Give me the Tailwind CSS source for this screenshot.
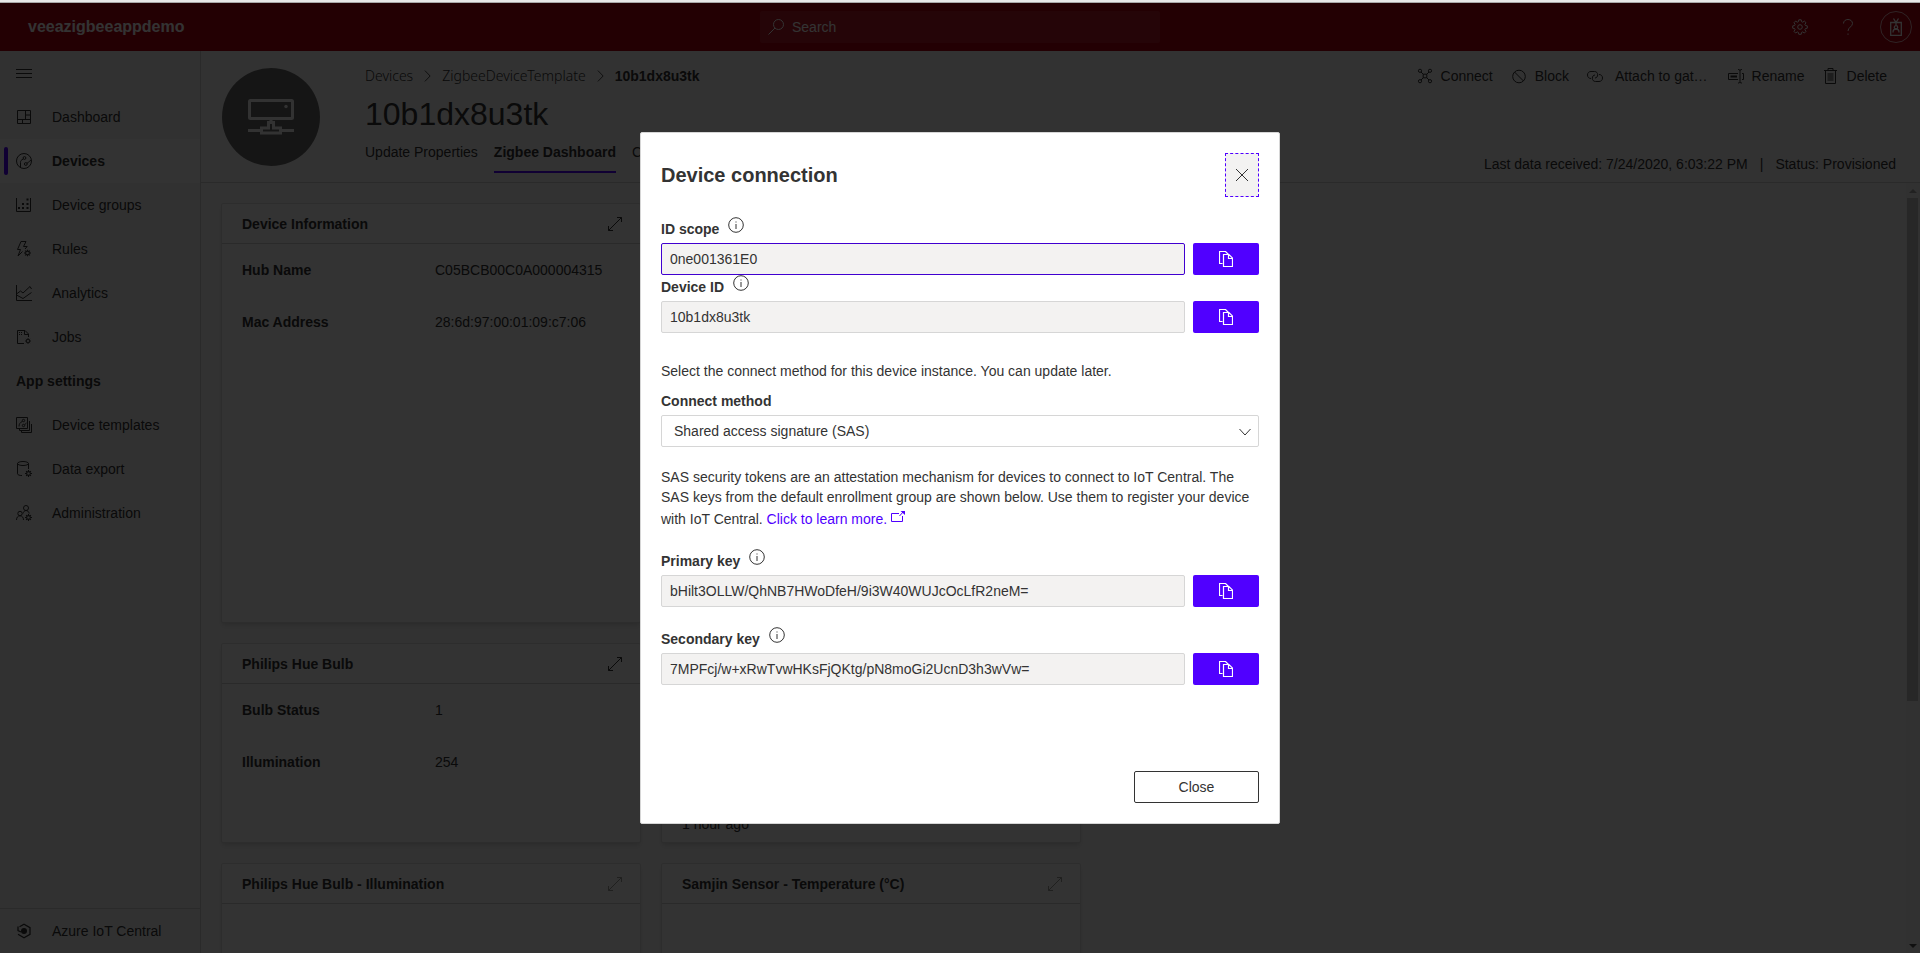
<!DOCTYPE html>
<html lang="en">
<head>
<meta charset="utf-8">
<meta name="viewport" content="width=device-width, initial-scale=1">
<title>Device connection</title>
<script src="https://cdn.jsdelivr.net/npm/@tailwindcss/browser@4"></script>
</head>
<body class="flex h-screen flex-col overflow-hidden bg-[#fafafa] font-['Liberation_Sans',Arial,sans-serif] text-sm leading-5 text-[#333333]">

<!-- Shared icon symbols -->
<svg class="hidden" aria-hidden="true">
  <symbol id="i-gear" viewBox="0 0 16 16"><path fill="none" stroke="currentColor" d="M6.8.8h2.4l.4 1.9 1.1.5 1.7-1.1 1.6 1.6-1.1 1.7.5 1.1 1.9.4v2.3l-1.9.4-.5 1.1 1.1 1.7-1.6 1.6-1.7-1.1-1.1.5-.4 1.9H6.8l-.4-1.9-1.1-.5-1.7 1.1L2 12.400l1.100-1.700-.5-1.100L.7 9.200V6.900l1.900-.4.500-1.100L2 3.700l1.600-1.600 1.700 1.100 1.100-.5z"/><circle cx="8" cy="8" r="2.300" fill="none" stroke="currentColor"/></symbol>
  <symbol id="i-minigear" viewBox="0 0 6 6"><circle cx="3" cy="3" r="1.600" fill="none" stroke="currentColor" stroke-width=".9"/><path stroke="currentColor" stroke-width=".9" d="M3 0v1.200M3 4.800V6M0 3h1.200M4.800 3H6M.9.9l.8.8M4.300 4.300l.8.8M5.100.9l-.8.8M1.700 4.300l-.8.8"/></symbol>
  <symbol id="i-expand" viewBox="0 0 14 14"><path fill="none" stroke="currentColor" d="M.5 13.500l13-13M9 .5h4.500V5M.5 9v4.500H5"/></symbol>
  <symbol id="i-info" viewBox="0 0 16 16"><circle cx="8" cy="8" r="7.300" fill="none" stroke="currentColor"/><path stroke="currentColor" d="M8 7v5M8 4.500v1"/></symbol>
  <symbol id="i-copy" viewBox="0 0 14 16"><path fill="none" stroke="currentColor" stroke-width="1.200" d="M3.500 12.500h-3V.5h6l3 3M4.500 3.500h5.500l3.500 3.500v8.500h-9zM9.500 3.500v4h4"/></symbol>
  <symbol id="i-chev" viewBox="0 0 8 14"><path fill="none" stroke="currentColor" d="M1 .8L7 7l-6 6.200"/></symbol>
</svg>

<div class="h-[3px] shrink-0 border-b border-[#a8a8a8] bg-[#e8e8e8]"></div>

<header class="grid h-12 shrink-0 grid-cols-[1fr_400px_1fr] items-center bg-[#b00010] text-white">
  <div class="pl-7 text-base font-bold">veeazigbeeappdemo</div>
  <label class="flex h-8 items-center gap-2 rounded-xs bg-white/10 pl-2">
    <svg class="size-4 shrink-0" viewBox="0 0 16 16" fill="none" stroke="currentColor" aria-hidden="true"><circle cx="10.500" cy="5.500" r="5"/><path d="M7 9L.5 15.500"/></svg>
    <input type="search" aria-label="Search" placeholder="Search" class="w-full bg-transparent outline-none placeholder:text-white">
  </label>
  <div class="flex items-center justify-end pr-2">
    <button aria-label="Settings" class="grid size-12 place-items-center"><svg class="size-4"><use href="#i-gear"/></svg></button>
    <button aria-label="Help" class="grid size-12 place-items-center"><svg class="size-4" viewBox="0 0 16 16" fill="none" stroke="currentColor"><path d="M3.500 4.500c0-2.500 2-4 4.500-4s4.500 1.700 4.500 4c0 3-4.500 4-4.500 7.500M8 14.500v1.300"/></svg></button>
    <button aria-label="Account" class="ml-2 grid size-8 place-items-center rounded-full border border-white/70"><svg class="h-[18px] w-3" viewBox="0 0 12 18" fill="none" stroke="currentColor" stroke-width="1.300"><path d="M.7 4.500h10.600v12.800H.7zM3.500.5l2.500 4 2.500-4M6 4v3M3 14.500c0-2 1-3.500 3-3.500s3 1.500 3 3.500"/><circle cx="6" cy="9.300" r="1.700"/></svg></button>
  </div>
</header>

<div class="flex min-h-0 flex-1">
  <nav class="flex w-[201px] shrink-0 flex-col border-r border-[#d2d2d2] bg-[#f5f5f5]">
    <button aria-label="Toggle navigation" class="flex h-11 items-center pl-4"><svg class="size-4" viewBox="0 0 16 16" stroke="currentColor"><path d="M0 4.500h16M0 8.500h16M0 12.500h16"/></svg></button>
    <a href="#" class="flex h-11 items-center gap-5 pl-4"><svg class="size-4" viewBox="0 0 16 16" fill="none" stroke="currentColor"><path d="M1.500 1.500h13v13h-13zM9.500 1.500v9M1.500 10.500h13M9.500 6h5M6.500 10.500v4"/></svg>Dashboard</a>
    <a href="#" aria-current="page" class="flex h-11 items-center bg-[#fdfdfd] pl-1 font-bold"><span class="h-7 w-1 rounded-full bg-[#5000ff]"></span><svg class="mr-5 ml-2 size-4" viewBox="0 0 16 16" fill="none" stroke="currentColor"><circle cx="8" cy="8" r="7.500"/><circle cx="8.500" cy="5" r="1.400"/><circle cx="9.800" cy="11" r="1.400"/><path d="M7.300 6C5 7 4.500 8 4.500 9.500V14M11 10.300C13 9 13.500 8 15 7.300"/></svg>Devices</a>
    <a href="#" class="flex h-11 items-center gap-5 pl-4"><svg class="size-4" viewBox="0 0 16 16"><path fill="none" stroke="currentColor" d="M.5 1v13.500h14V1"/><path fill="currentColor" d="M2 10h2v2H2zM6 10h2v2H6zM10.500 10h2v2h-2zM6 6h2v2H6zM10.500 6h2v2h-2zM10.500 1.500h2v2h-2z"/></svg>Device groups</a>
    <a href="#" class="flex h-11 items-center gap-5 pl-4"><svg class="size-4" viewBox="0 0 16 16" fill="none" stroke="currentColor"><path d="M5 .5h5L7.500 5.500h3.700L9 8M5 .5L1.500 8.500h3L2 15l4.500-4.500"/><use href="#i-minigear" x="8" y="8.500" width="7" height="7"/></svg>Rules</a>
    <a href="#" class="flex h-11 items-center gap-5 pl-4"><svg class="size-4" viewBox="0 0 16 16" fill="none" stroke="currentColor"><path d="M.5 0v15.500H16M.5 9l4-3 2.500 2L14 1.500l1.500 2.500M.5 10L7 13.500l8.500-6"/></svg>Analytics</a>
    <a href="#" class="flex h-11 items-center gap-5 pl-4"><svg class="size-4" viewBox="0 0 16 16" fill="none" stroke="currentColor"><path d="M8 14.500H1.500v-13H9l3.500 3.500v3M8.500 1.500V5.500h4"/><path stroke-dasharray="1 1" d="M3 3.500h4M3 5.500h4"/><use href="#i-minigear" x="9" y="9" width="6" height="6"/></svg>Jobs</a>
    <h2 class="flex h-11 items-center pl-4 font-bold">App settings</h2>
    <a href="#" class="flex h-11 items-center gap-5 pl-4"><svg class="size-4" viewBox="0 0 16 16" fill="none" stroke="currentColor"><path d="M.5.5h11v11H.5zM3.500 11.500v2h10V4M5.500 13.500v2h10V7"/><circle cx="7.500" cy="3.500" r="1.200"/><circle cx="7.500" cy="8.500" r="1.200"/><path d="M6.500 4.300C4 5.500 3 7 3 9.500M8.500 7.800L10.500 6"/></svg>Device templates</a>
    <a href="#" class="flex h-11 items-center gap-5 pl-4"><svg class="size-4" viewBox="0 0 16 16" fill="none" stroke="currentColor"><ellipse cx="7" cy="2.500" rx="5.500" ry="2"/><path d="M1.500 2.500v10.300c0 1 2 1.700 4.500 1.800M12.500 2.500V8"/><use href="#i-minigear" x="9" y="9" width="7" height="7"/></svg>Data export</a>
    <a href="#" class="flex h-11 items-center gap-5 pl-4"><svg class="size-4" viewBox="0 0 16 16" fill="none" stroke="currentColor"><circle cx="10" cy="3" r="2.500"/><circle cx="4" cy="8.500" r="2.200"/><path d="M.5 15c0-2.700 1.500-4.200 3.500-4.200S7.500 12.300 7.500 15M7 8.500c.5-1.800 1.500-3 3-3s2.800 1 3.200 3"/><use href="#i-minigear" x="9" y="9" width="7" height="7"/></svg>Administration</a>
    <a href="#" class="mt-auto flex h-[45px] items-center gap-5 border-t border-[#d2d2d2] pl-4"><svg class="size-4" viewBox="0 0 16 16" fill="none" stroke="currentColor"><path stroke-width="1.300" d="M3.500 3.800L8 1.300l6 3.400v6.600L8 14.700l-6-3.400M2 3.500v4l3 1.500"/><circle cx="8" cy="8" r="3" fill="currentColor" stroke="none"/></svg>Azure IoT Central</a>
  </nav>

  <main class="flex min-w-0 flex-1 flex-col">
    <section class="flex h-[132px] shrink-0 justify-between border-b border-[#d2d2d2] pl-[21px]">
      <div class="flex gap-[45px]">
        <div class="mt-[17px] grid size-[98px] shrink-0 place-items-center rounded-full bg-[#6b6b6b] text-[#fafafa]">
          <svg class="h-9 w-[46px]" viewBox="0 0 46 36" fill="none" stroke="currentColor" stroke-width="3"><rect x="1.500" y="1.500" width="43" height="18" rx="1"/><path d="M23 20v3M0 31.500h13M33 31.500h13M20.500 29v-5.500h5V29h7v5h-19V29z"/><circle cx="38" cy="7.500" r="1.700" fill="currentColor" stroke="none"/></svg>
        </div>
        <div>
          <nav aria-label="Breadcrumb" class="mt-[15px] flex items-center gap-[11px] whitespace-nowrap">
            <a href="#" class="font-['Noto_Sans',sans-serif] font-light">Devices</a>
            <svg class="h-[14px] w-[7px]"><use href="#i-chev"/></svg>
            <a href="#" class="font-['Noto_Sans',sans-serif] font-light">ZigbeeDeviceTemplate</a>
            <svg class="h-[14px] w-[7px]"><use href="#i-chev"/></svg>
            <span class="font-bold">10b1dx8u3tk</span>
          </nav>
          <h1 class="mt-2 text-[32px] leading-10">10b1dx8u3tk</h1>
          <div role="tablist" class="mt-2 flex gap-4 whitespace-nowrap">
            <button role="tab" class="h-[31px] pb-[11px]">Update Properties</button>
            <button role="tab" aria-selected="true" class="h-[31px] border-b-2 border-[#5000ff] pb-[9px] font-bold">Zigbee Dashboard</button>
            <button role="tab" class="h-[31px] pb-[11px]">Commands</button>
          </div>
        </div>
      </div>
      <div class="flex flex-col items-end justify-between pt-[15px] pb-2 whitespace-nowrap">
        <div class="flex pr-[33px]">
          <button class="mr-[18px] flex items-center gap-2"><svg class="size-4" viewBox="0 0 16 16" fill="none" stroke="currentColor"><circle cx="3" cy="2.800" r="1.600"/><circle cx="13" cy="2.800" r="1.600"/><circle cx="3" cy="13.200" r="1.600"/><circle cx="13" cy="13.200" r="1.600"/><path d="M6.200 6.200h3.600v3.600H6.200zM4 4l2.300 2.300M12 4L9.700 6.300M4 12l2.300-2.300M12 12L9.700 9.700"/></svg>Connect</button>
          <button class="mr-[18px] flex items-center gap-2"><svg class="size-4" viewBox="0 0 16 16" fill="none" stroke="currentColor"><circle cx="8" cy="8.500" r="6.300"/><path d="M3.500 4l9 9"/></svg>Block</button>
          <button class="mr-5 flex items-center gap-3"><svg class="size-4" viewBox="0 0 16 16" fill="none" stroke="currentColor"><path d="M4 10.500C2 10.500.5 9.200.5 7S2 3.500 4 3.500h3.500c2 0 3.200 1.500 3.200 3.300S9.500 10 8 10"/><path d="M12 6.500c2 0 3.500 1.300 3.500 3.500s-1.500 3.500-3.500 3.500H8.500c-2 0-3.200-1.500-3.200-3.300S6.500 7 8 7"/></svg>Attach to gat…</button>
          <button class="mr-[18px] flex items-center gap-2"><svg class="size-4" viewBox="0 0 16 16" fill="none" stroke="currentColor"><path d="M10 11.500H.5v-6H10M14 5.500h1.500v6H14M12 2v12.500M10 1.500c1.500 0 2 .5 2 1 0-.5.500-1 2-1M10 15c1.500 0 2-.5 2-1 0 .5.500 1 2 1"/><path stroke-width="2" d="M2.500 8.500H9"/></svg>Rename</button>
          <button class="flex items-center gap-2"><svg class="size-4" viewBox="0 0 16 16" fill="none" stroke="currentColor"><path d="M1 2.500h13M5 2.500v-2h5v2M2.500 2.500v13h10v-13"/><path fill="currentColor" fill-opacity=".5" stroke="none" d="M4.500 5h6v8h-6z"/></svg>Delete</button>
        </div>
        <div class="flex gap-3 pr-6"><span>Last data received: 7/24/2020, 6:03:22 PM</span><span>|</span><span>Status: Provisioned</span></div>
      </div>
    </section>

    <div class="flex min-h-0 flex-1">
      <div class="grid flex-1 grid-cols-[420px_420px] grid-rows-[420px_200px_200px] gap-5 overflow-hidden p-5">
        <section class="rounded-xs border border-[#e0e0e0] bg-[#fdfdfd] shadow-md">
          <div class="flex h-10 items-center justify-between border-b border-[#d2d2d2] pr-[18px] pl-5"><h3 class="font-bold">Device Information</h3><button aria-label="Expand"><svg class="size-[14px]"><use href="#i-expand"/></svg></button></div>
          <dl class="grid grid-cols-[193px_1fr] gap-y-8 px-5 pt-4">
            <dt class="font-bold">Hub Name</dt><dd>C05BCB00C0A000004315</dd>
            <dt class="font-bold">Mac Address</dt><dd>28:6d:97:00:01:09:c7:06</dd>
          </dl>
        </section>
        <section class="rounded-xs border border-[#e0e0e0] bg-[#fdfdfd] shadow-md"></section>
        <section class="rounded-xs border border-[#e0e0e0] bg-[#fdfdfd] shadow-md">
          <div class="flex h-10 items-center justify-between border-b border-[#d2d2d2] pr-[18px] pl-5"><h3 class="font-bold">Philips Hue Bulb</h3><button aria-label="Expand"><svg class="size-[14px]"><use href="#i-expand"/></svg></button></div>
          <dl class="grid grid-cols-[193px_1fr] gap-y-8 px-5 pt-4">
            <dt class="font-bold">Bulb Status</dt><dd>1</dd>
            <dt class="font-bold">Illumination</dt><dd>254</dd>
          </dl>
        </section>
        <section class="flex items-end rounded-xs border border-[#e0e0e0] bg-[#fdfdfd] px-5 pb-2 shadow-md"><p>1 hour ago</p></section>
        <section class="rounded-xs border border-[#e0e0e0] bg-[#fdfdfd] shadow-md">
          <div class="flex h-10 items-center justify-between border-b border-[#d2d2d2] pr-[18px] pl-5"><h3 class="font-bold">Philips Hue Bulb - Illumination</h3><button disabled aria-label="Expand" class="text-[#a19f9d]"><svg class="size-[14px]"><use href="#i-expand"/></svg></button></div>
        </section>
        <section class="rounded-xs border border-[#e0e0e0] bg-[#fdfdfd] shadow-md">
          <div class="flex h-10 items-center justify-between border-b border-[#d2d2d2] pr-[18px] pl-5"><h3 class="font-bold">Samjin Sensor - Temperature (°C)</h3><button disabled aria-label="Expand" class="text-[#a19f9d]"><svg class="size-[14px]"><use href="#i-expand"/></svg></button></div>
        </section>
      </div>
      <!-- Scrollbar -->
      <div class="flex w-[14px] shrink-0 flex-col items-center bg-[#f5f5f5]" aria-hidden="true">
        <svg class="h-[15px] w-2 shrink-0 text-[#a3a3a3]" viewBox="0 0 8 15"><path fill="currentColor" d="M4 6l4 4H0z"/></svg>
        <div class="min-h-0 w-full flex-1 pr-0.5 pl-px"><div class="h-[68%] bg-[#c1c1c1]"></div></div>
        <svg class="h-[15px] w-2 shrink-0" viewBox="0 0 8 15"><path fill="#505050" d="M4 10L0 6h8z"/></svg>
      </div>
    </div>
  </main>
</div>

<!-- Modal layer -->
<div class="fixed inset-x-0 top-[3px] bottom-0 grid place-items-center bg-black/80">
  <div role="dialog" aria-modal="true" aria-labelledby="dlg-title" class="w-full max-w-[640px] rounded-xs border border-[#d6d6d6] bg-white p-5">
    <div class="flex h-11 items-center justify-between">
      <h2 id="dlg-title" class="text-xl font-bold">Device connection</h2>
      <button aria-label="Close dialog" class="grid h-11 w-[34px] place-items-center border border-dashed border-[#5000ff] bg-[#f3f2f1]"><svg class="size-3" viewBox="0 0 12 12" stroke="currentColor"><path d="M0 0l12 12M12 0L0 12"/></svg></button>
    </div>

    <div class="mt-5 flex h-[26px] items-start gap-[9px]"><label for="scope" class="pt-0.5 font-bold">ID scope</label><svg class="size-4"><use href="#i-info"/></svg></div>
    <div class="flex gap-2">
      <input id="scope" readonly value="0ne001361E0" class="h-8 min-w-0 flex-1 rounded-xs border border-[#4000d0] bg-[#f3f2f1] px-2 outline-none">
      <button aria-label="Copy ID scope" class="grid h-8 w-[66px] place-items-center rounded-xs bg-[#5000ff] text-white"><svg class="h-4 w-[14px]"><use href="#i-copy"/></svg></button>
    </div>

    <div class="flex h-[26px] items-start gap-[9px]"><label for="devid" class="pt-0.5 font-bold">Device ID</label><svg class="size-4"><use href="#i-info"/></svg></div>
    <div class="flex gap-2">
      <input id="devid" readonly value="10b1dx8u3tk" class="h-8 min-w-0 flex-1 rounded-xs border border-[#d6d6d6] bg-[#f3f2f1] px-2 outline-none">
      <button aria-label="Copy device ID" class="grid h-8 w-[66px] place-items-center rounded-xs bg-[#5000ff] text-white"><svg class="h-4 w-[14px]"><use href="#i-copy"/></svg></button>
    </div>

    <p class="mt-7">Select the connect method for this device instance. You can update later.</p>
    <label for="method" class="mt-2.5 mb-1 block font-bold">Connect method</label>
    <div class="relative">
      <select id="method" class="h-8 w-full appearance-none rounded-xs border border-[#d6d6d6] bg-white px-3"><option>Shared access signature (SAS)</option></select>
      <svg class="pointer-events-none absolute top-[13px] right-2 h-2 w-3" viewBox="0 0 12 8" fill="none" stroke="currentColor" aria-hidden="true"><path d="M.5 1L6 7l5.500-6"/></svg>
    </div>

    <p class="mt-5">SAS security tokens are an attestation mechanism for devices to connect to IoT Central. The SAS keys from the default enrollment group are shown below. Use them to register your device with IoT Central. <a href="#" class="text-[#5000ff]">Click to learn more. <svg class="inline-block h-[15px] w-[14px] align-[2px]" viewBox="0 0 14 15" fill="none" stroke="currentColor" aria-hidden="true"><path d="M8 6.500H.5v8h11V9M8.500 9l4-4.500"/><path fill="currentColor" stroke="none" d="M9.500 4H14v4z"/></svg></a></p>

    <div class="mt-5 flex h-[26px] items-start gap-[9px]"><label for="pkey" class="pt-0.5 font-bold">Primary key</label><svg class="size-4"><use href="#i-info"/></svg></div>
    <div class="flex gap-2">
      <input id="pkey" readonly value="bHilt3OLLW/QhNB7HWoDfeH/9i3W40WUJcOcLfR2neM=" class="h-8 min-w-0 flex-1 rounded-xs border border-[#d6d6d6] bg-[#f3f2f1] px-2 outline-none">
      <button aria-label="Copy primary key" class="grid h-8 w-[66px] place-items-center rounded-xs bg-[#5000ff] text-white"><svg class="h-4 w-[14px]"><use href="#i-copy"/></svg></button>
    </div>

    <div class="mt-5 flex h-[26px] items-start gap-[9px]"><label for="skey" class="pt-0.5 font-bold">Secondary key</label><svg class="size-4"><use href="#i-info"/></svg></div>
    <div class="flex gap-2">
      <input id="skey" readonly value="7MPFcj/w+xRwTvwHKsFjQKtg/pN8moGi2UcnD3h3wVw=" class="h-8 min-w-0 flex-1 rounded-xs border border-[#d6d6d6] bg-[#f3f2f1] px-2 outline-none">
      <button aria-label="Copy secondary key" class="grid h-8 w-[66px] place-items-center rounded-xs bg-[#5000ff] text-white"><svg class="h-4 w-[14px]"><use href="#i-copy"/></svg></button>
    </div>

    <div class="mt-[86px] flex justify-end"><button class="h-8 w-[125px] rounded-xs border border-[#333333] bg-white">Close</button></div>
  </div>
</div>
</body>
</html>
